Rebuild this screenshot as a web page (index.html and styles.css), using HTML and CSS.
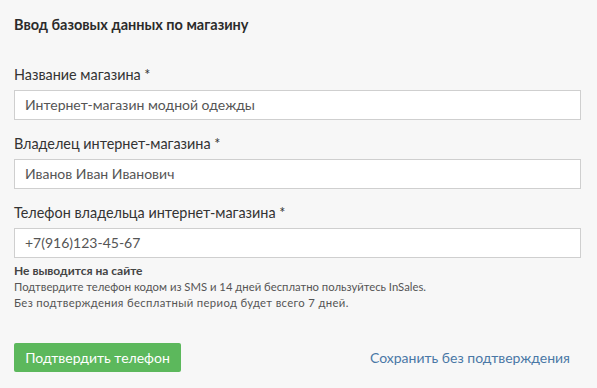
FILE: index.html
```html
<!DOCTYPE html>
<html lang="ru">
<head>
<meta charset="utf-8">
<link rel="stylesheet" href="styles.css">
</head>
<body>
<div class="page">
  <h1 class="title">Ввод базовых данных по магазину</h1>
  <div class="field">
    <label class="label">Название магазина *</label>
    <div class="input">Интернет-магазин модной одежды</div>
  </div>
  <div class="field">
    <label class="label">Владелец интернет-магазина *</label>
    <div class="input">Иванов Иван Иванович</div>
  </div>
  <div class="field">
    <label class="label">Телефон владельца интернет-магазина *</label>
    <div class="input">+7(916)123-45-67</div>
    <div class="help">
      <div class="help-title">Не выводится на сайте</div>
      <div class="help-text">Подтвердите телефон кодом из SMS и 14 дней бесплатно пользуйтесь InSales.</div>
      <div class="help-text help-wide">Без подтверждения бесплатный период будет всего 7 дней.</div>
    </div>
  </div>
  <div class="actions">
    <button class="btn">Подтвердить телефон</button>
    <a class="link">Сохранить без подтверждения</a>
  </div>
</div>
</body>
</html>
```
FILE: styles.css
```css
html, body {
  margin: 0;
  padding: 0;
  background: #f7f7f7;
}
body {
  font-family: Lato, "Noto Sans", sans-serif;
  color: #333;
  width: 597px;
  height: 388px;
  overflow: hidden;
}
.page {
  padding: 16px 16px 0 14px;
}
.title {
  margin: 0;
  font-size: 14.5px;
  font-weight: 700;
  line-height: 18px;
  color: #2b2b2b;
}
.field {
  display: flex;
  flex-direction: column;
  margin-top: 15px;
}
.title + .field {
  margin-top: 32px;
}
.label {
  font-size: 14.4px;
  line-height: 18px;
  color: #333;
  margin-bottom: 6px;
}
.input {
  height: 28px;
  border: 1px solid #cfcfcf;
  background: #fff;
  padding: 0 10px;
  font-size: 14px;
  line-height: 28px;
  color: #555;
}
.help {
  margin-top: 5px;
}
.help-title {
  font-size: 12px;
  font-weight: 700;
  line-height: 16px;
  color: #444;
}
.help-text {
  font-size: 11.3px;
  line-height: 16px;
  color: #555;
}
.help-wide {
  letter-spacing: 0.35px;
}
.actions {
  display: flex;
  align-items: center;
  justify-content: space-between;
  margin-top: 32px;
  padding-right: 11px;
}
.btn {
  height: 29px;
  width: 167px;
  border: 0;
  border-radius: 2px;
  background: #5cb85c;
  color: #fff;
  font-family: Lato, "Noto Sans", sans-serif;
  font-size: 14px;
  padding: 0;
}
.link {
  font-size: 14px;
  color: #4a78a6;
}
```
